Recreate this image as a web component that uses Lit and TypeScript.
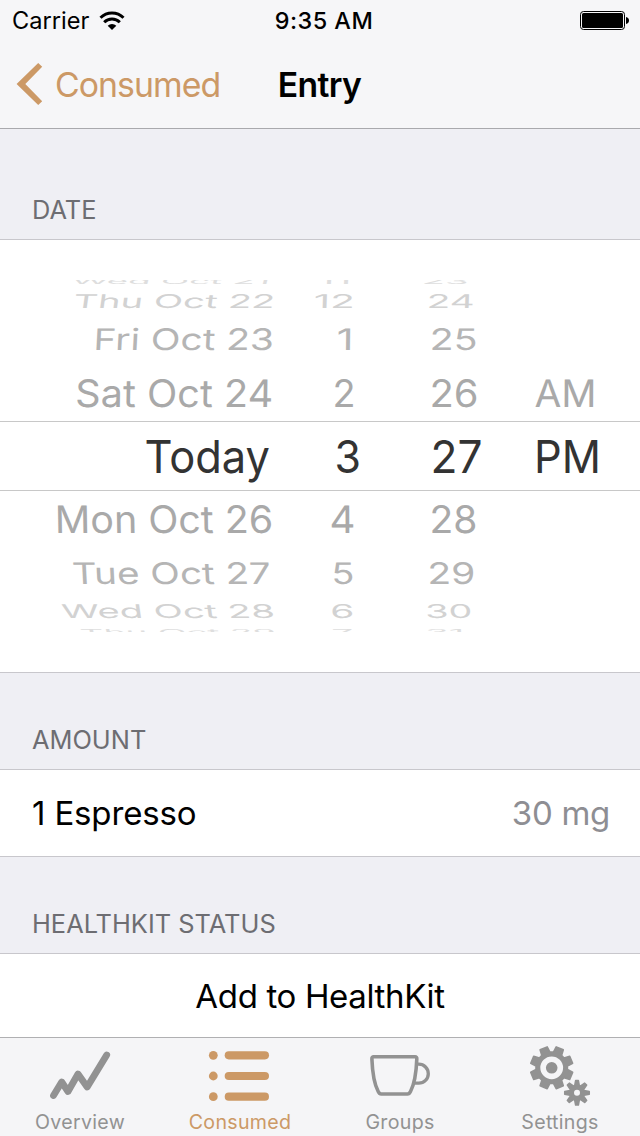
import { LitElement, html, svg, css } from "lit";
import { customElement } from "lit/decorators.js";

type Cell = [text: string, left: number, right: number];
interface Row {
  base: number;
  cap: number;
  color: string;
  skew: number;
  cells: Cell[];
}

const CAP = 0.727;

const rows: Row[] = [
  { base: 284, cap: 6, color: "#dedede", skew: -14, cells: [["Wed Oct 21", 73, 268], ["11", 319, 350], ["23", 423, 467]] },
  { base: 308, cap: 13.8, color: "#d2d2d2", skew: -8, cells: [["Thu Oct 22", 74, 272.5], ["12", 315, 353], ["24", 428, 473]] },
  { base: 350, cap: 21.6, color: "#b5b5b5", skew: -3, cells: [["Fri Oct 23", 94.5, 272], ["1", 338, 352], ["25", 431, 476]] },
  { base: 407, cap: 27.6, color: "#a9a9a9", skew: -1, cells: [["Sat Oct 24", 76.5, 271.5], ["2", 334, 354], ["26", 431, 477], ["AM", 536, 595]] },
  { base: 473, cap: 32.8, color: "#333333", skew: 0, cells: [["Today", 146, 268.5], ["3", 336, 359.5], ["27", 432, 481], ["PM", 535.5, 599.5]] },
  { base: 532.7, cap: 27.6, color: "#a9a9a9", skew: 1, cells: [["Mon Oct 26", 56.5, 272], ["4", 331, 354], ["28", 431, 476]] },
  { base: 583.7, cap: 21.6, color: "#b5b5b5", skew: 3, cells: [["Tue Oct 27", 74, 270], ["5", 333, 353], ["29", 429, 474]] },
  { base: 618, cap: 13.8, color: "#d2d2d2", skew: 8, cells: [["Wed Oct 28", 64, 274], ["6", 332, 353], ["30", 427, 471]] },
  { base: 634.5, cap: 6, color: "#dedede", skew: 14, cells: [["Thu Oct 29", 82, 275], ["7", 333, 352], ["31", 427, 463]] },
];

@customElement("wheel-picker")
class WheelPicker extends LitElement {
  static styles = css`
    :host { display: block; height: 432px; }
    svg { display: block; font-family: Inter, "Liberation Sans", sans-serif; }
  `;
  render() {
    return html`<svg width="640" height="432" viewBox="0 240 640 432">
      <defs><clipPath id="drum"><rect x="0" y="280" width="640" height="352" /></clipPath></defs>
      <rect x="0" y="421" width="640" height="1" fill="#c8c8c8" />
      <rect x="0" y="490" width="640" height="1" fill="#c8c8c8" />
      <g clip-path="url(#drum)">
        ${rows.map((r) => r.cells.map(([t, l, e], i) => svg`<text
          transform="translate(${l - 1.5} ${r.base}) skewX(${i === 0 ? r.skew : r.skew / 4})"
          font-size=${r.cap / CAP} fill=${r.color}
          textLength=${e - l + 3} lengthAdjust="spacingAndGlyphs">${t}</text>`))}
      </g>
    </svg>`;
  }
}

function gear(cx: number, cy: number, phase: number, inner: number, outer: number, wide: number, tip: number): string {
  const pts: string[] = [];
  for (let i = 0; i < 8; i++) {
    const a = ((i + phase) * Math.PI) / 4;
    for (const [r, d] of [[inner, -wide], [outer, -tip], [outer, tip], [inner, wide]]) {
      pts.push(`${(cx + r * Math.cos(a + d)).toFixed(2)},${(cy + r * Math.sin(a + d)).toFixed(2)}`);
    }
  }
  return pts.join(" ");
}

@customElement("app-root")
class AppRoot extends LitElement {
  static styles = css`
    :host {
      display: flex; flex-direction: column; width: 640px; height: 1136px; overflow: hidden;
      background: #efeff4; color: #000;
      font-family: Inter, "Liberation Sans", sans-serif;
    }
    * { box-sizing: border-box; }
    svg { display: block; }
    .top { height: 129px; background: #f6f6f8; border-bottom: 1px solid #a9a9ad; }
    .status, .nav { display: grid; grid-template-columns: 1fr auto 1fr; align-items: center; white-space: nowrap; }
    .status { height: 40px; padding: 1px 11px 0 12px; font-size: 23.6px; line-height: 39px; }
    .carrier { display: flex; align-items: center; gap: 10px; letter-spacing: 0; }
    .clock { font-weight: 500; font-size: 23.4px; letter-spacing: 0.5px; padding-left: 7px; }
    .battery { justify-self: end; }
    .nav { height: 88px; padding: 0 16px; line-height: 87px; }
    .back { display: flex; align-items: center; gap: 12px; color: #cc9966; font-size: 33.8px; letter-spacing: -0.95px; }
    .back span, .title { padding-top: 1px; }
    .title { font-size: 33.7px; font-weight: 600; letter-spacing: -0.6px; position: relative; left: -0.5px; }
    .head { padding-left: 32px; color: #6d6d72; font-size: 25.4px; line-height: 30px; display: flex; align-items: flex-end; border-bottom: 1px solid #c8c7cc; letter-spacing: 0; }
    .h1 { height: 111px; padding-bottom: 14px; }
    .h2 { height: 97px; padding-bottom: 14px; }
    .panel { background: #fff; border-bottom: 1px solid #c8c7cc; }
    .row { height: 87px; display: flex; align-items: center; justify-content: space-between; padding: 0 30px 0 32px; font-size: 33px; letter-spacing: -0.3px; }
    .entry { letter-spacing: -0.15px; }
    .amount { color: #8e8e93; }
    .action { height: 83px; background: #fff; display: flex; align-items: center; justify-content: center; font-size: 33px; letter-spacing: -0.35px; }
    .tabs { height: 99px; flex: none; background: #f5f5f7; border-top: 1px solid #b0b0b2; display: grid; grid-template-columns: repeat(4, 1fr); }
    .tab { display: flex; flex-direction: column; align-items: center; color: #929292; font-size: 19.6px; letter-spacing: 0.3px; line-height: 24px; }
    .icon { height: 72px; width: 160px; }
    .active { color: #cc9966; }
  `;
  render() {
    return html`
      <header class="top">
        <div class="status">
          <div class="carrier"><span>Carrier</span>
            <svg width="26" height="20" viewBox="0 0 26 20" fill="none" stroke="#000" stroke-width="3">
              <path d="M1.5 6.8a16.4 16.4 0 0 1 23 0" />
              <path d="M5.2 11.3a11.1 11.1 0 0 1 15.6 0" />
              <path d="M13 19l-4.3-4.3a6.2 6.2 0 0 1 8.6 0z" fill="#000" stroke="none" />
            </svg>
          </div>
          <div class="clock">9:35 AM</div>
          <svg class="battery" width="49" height="20" viewBox="0 0 49 20">
            <rect x=".5" y=".5" width="44" height="18" rx="3" fill="none" stroke="#000" />
            <rect x="2" y="2" width="41" height="15" rx="1.5" />
            <path d="M46 6q3 .7 3 3.5t-3 3.5z" />
          </svg>
        </div>
        <div class="nav">
          <div class="back">
            <svg width="27" height="42" viewBox="0 0 27 42"><path d="M22.2 0L26.2 3.8 9.3 21 26.2 38.2 22.2 42 .6 21z" fill="#cc9966" /></svg>
            <span>Consumed</span>
          </div>
          <div class="title">Entry</div>
          <span></span>
        </div>
      </header>
      <div class="head h1">DATE</div>
      <div class="panel"><wheel-picker></wheel-picker></div>
      <div class="head h2">AMOUNT</div>
      <div class="panel row"><span class="entry">1 Espresso</span><span class="amount">30 mg</span></div>
      <div class="head h2">HEALTHKIT STATUS</div>
      <div class="action">Add to HealthKit</div>
      <nav class="tabs">
        <div class="tab">
          <svg class="icon" viewBox="0 1038 160 72"><path d="M53.5 1095.5L61.7 1082 68 1091.5 78 1074 87.2 1087 106.7 1055" fill="none" stroke="#929292" stroke-width="6.8" stroke-linecap="round" stroke-linejoin="round" /></svg>
          <span>Overview</span>
        </div>
        <div class="tab active">
          <svg class="icon" viewBox="160 1038 160 72" fill="#cc9966">
            ${[1055.3, 1076, 1096.7].map((y) => svg`<circle cx="213.3" cy=${y} r="4.4" /><rect x="224.7" y=${y - 4.1} width="44.3" height="8.2" rx="4.1" />`)}
          </svg>
          <span>Consumed</span>
        </div>
        <div class="tab">
          <svg class="icon" viewBox="320 1038 160 72" fill="none" stroke="#929292" stroke-width="3.6" stroke-linejoin="round">
            <path d="M373.7 1056.8H415Q417 1056.8 416.8 1059Q416 1081 410.5 1091.5Q409.3 1094 407.5 1094H381.2Q379.4 1094 378.2 1091.5Q372.7 1081 371.9 1059Q371.7 1056.8 373.7 1056.8Z" />
            <path d="M417 1064.2H418.8A9.5 9.5 0 0 1 418.8 1083.2H415" stroke-width="3.3" />
          </svg>
          <span>Groups</span>
        </div>
        <div class="tab">
          <svg class="icon" viewBox="480 1038 160 72">
            <g fill="#929292" stroke="#929292" stroke-width="1.6" stroke-linejoin="round">
              <polygon points=${gear(551.7, 1067.8, 0.5, 15.8, 21.4, 0.28, 0.18)} />
              <polygon points=${gear(577, 1092.8, 0, 7.4, 12.3, 0.32, 0.11)} />
            </g>
            <circle cx="551.7" cy="1067.8" r="8.6" fill="#929292" stroke="#f5f5f7" stroke-width="5.6" />
            <circle cx="577" cy="1092.8" r="3" fill="#f5f5f7" />
          </svg>
          <span>Settings</span>
        </div>
      </nav>
    `;
  }
}
